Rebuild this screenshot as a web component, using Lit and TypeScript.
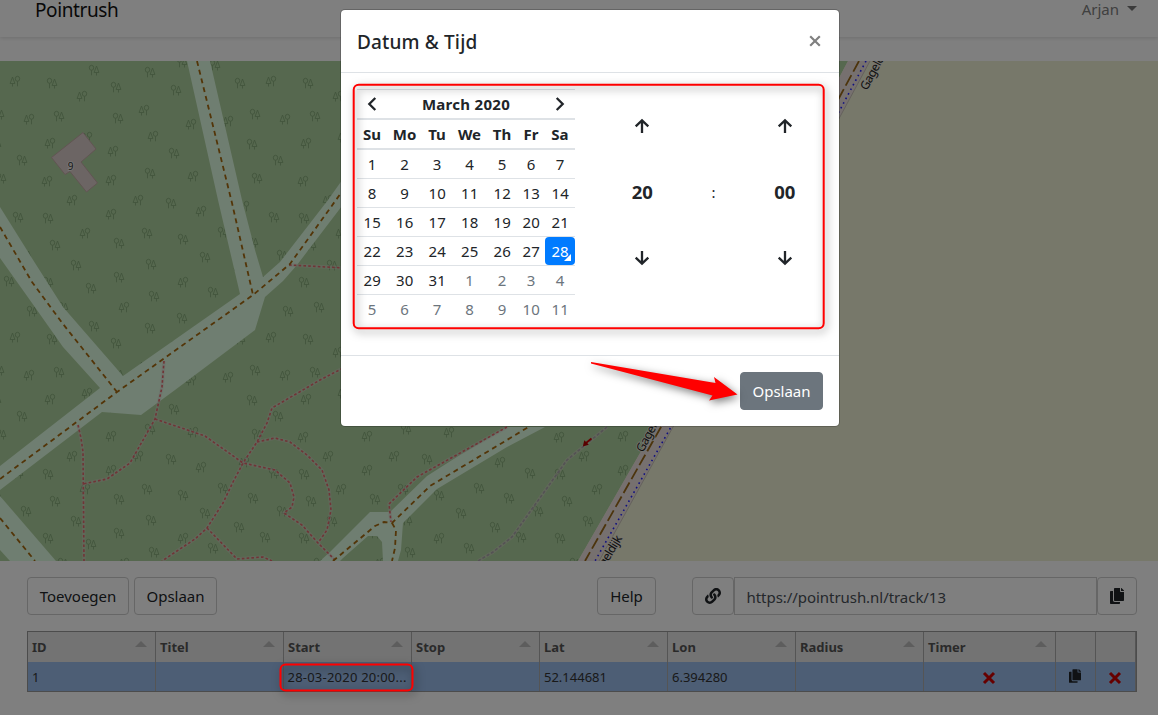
import { LitElement, html, svg, css } from "lit";
import { customElement } from "lit/decorators.js";

const COPY =
  "M320 448v40c0 13.255-10.745 24-24 24H24c-13.255 0-24-10.745-24-24V120c0-13.255 10.745-24 24-24h72v296c0 30.879 25.121 56 56 56h168zm0-344V0H152c-13.255 0-24 10.745-24 24v368c0 13.255 10.745 24 24 24h272c13.255 0 24-10.745 24-24V128H344c-13.2 0-24-10.8-24-24zm120.971-31.029L375.029 7.029A24 24 0 0 0 358.059 0H352v96h96v-6.059a24 24 0 0 0-7.029-16.97z";
const LINK =
  "M326.612 185.391c59.747 59.809 58.927 155.698.36 214.59-.11.12-.24.25-.36.37l-67.2 67.2c-59.27 59.27-155.699 59.262-214.96 0-59.27-59.26-59.27-155.7 0-214.96l37.106-37.106c9.84-9.84 26.786-3.3 27.294 10.606.648 17.722 3.826 35.527 9.69 52.721 1.986 5.822.567 12.262-3.783 16.612l-13.087 13.087c-28.026 28.026-28.905 73.66-1.155 101.96 28.024 28.579 74.086 28.749 102.325.51l67.2-67.19c28.191-28.191 28.073-73.757 0-101.83-3.701-3.694-7.429-6.564-10.341-8.569a16.037 16.037 0 0 1-6.947-12.606c-.396-10.567 3.348-21.456 11.698-29.806l21.054-21.055c5.521-5.521 14.182-6.199 20.584-1.731a152.482 152.482 0 0 1 20.522 17.197zM467.547 44.449c-59.261-59.262-155.69-59.27-214.96 0l-67.2 67.2c-.12.12-.25.25-.36.37-58.566 58.892-59.387 154.781.36 214.59a152.454 152.454 0 0 0 20.521 17.196c6.402 4.468 15.064 3.789 20.584-1.731l21.054-21.055c8.35-8.35 12.094-19.239 11.698-29.806a16.037 16.037 0 0 0-6.947-12.606c-2.912-2.005-6.64-4.875-10.341-8.569-28.073-28.073-28.191-73.639 0-101.83l67.2-67.19c28.239-28.239 74.3-28.069 102.325.51 27.75 28.3 26.872 73.934-1.155 101.96l-13.087 13.087c-4.35 4.35-5.769 10.79-3.783 16.612 5.864 17.194 9.042 34.999 9.69 52.721.509 13.906 17.454 20.446 27.294 10.606l37.106-37.106c59.271-59.259 59.271-155.699.001-214.959z";

// Tree pairs of one 256px forest tile; the flag puts the conifer first.
const TREES: [number, number, number][] = [
  [15, 81, 1], [52, 83, 0], [94, 70, 0], [150, 72, 0], [116, 87, 0], [82, 96, 1], [176, 90, 0],
  [255, 114, 0], [29, 119, 1], [59, 116, 0], [118, 118, 0], [144, 110, 1], [191, 124, 1],
  [228, 121, 1], [240, 83, 0], [153, 136, 1], [87, 137, 1], [50, 143, 1], [113, 151, 1],
  [174, 153, 0], [22, 160, 0], [252, 144, 0], [47, 181, 1], [111, 180, 1], [150, 173, 0],
  [193, 176, 1], [257, 178, 0], [72, 200, 1], [138, 200, 1], [182, 62, 0], [215, 65, 0],
  [171, 203, 0], [18, 217, 0], [48, 218, 0], [111, 214, 1], [201, 211, 1], [244, 206, 1],
  [85, 233, 1], [147, 233, 0], [119, 243, 0], [183, 239, 0], [55, 245, 0], [223, 232, 0],
  [253, 242, 0], [205, 257, 0], [151, 264, 0], [76, 265, 0], [26, 255, 0], [9, 281, 0],
  [48, 282, 0], [119, 277, 0], [91, 288, 0], [183, 282, 1], [213, 292, 0], [154, 296, 0],
  [124, 307, 1], [32, 311, 0], [63, 307, 0], [239, 271, 0],
];

const TREE_PATH = TREES.flatMap(([x, y, coniferFirst]) => {
  const c = coniferFirst ? x - 2.5 : x + 2.5;
  const r = coniferFirst ? x + 2.5 : x - 2.5;
  const out: string[] = [];
  for (let i = -1; i < 3; i++)
    for (let j = -1; j < 2; j++) {
      const dx = i * 256, dy = j * 256;
      out.push(
        `M${c + dx} ${y + dy - 4}l-2.4 6.5h4.8zM${c + dx} ${y + dy + 2.5}v3` +
        `M${r + dx - 2.2} ${y + dy - 2.2}a2.2 2.5 0 1 0 4.4 0a2.2 2.5 0 1 0 -4.4 0M${r + dx} ${y + dy + 0.3}v5`
      );
    }
  return out;
}).join("");

const FIELDS = [
  "M0 207L35 263L63 307L123 376L240 294L218 200L187 61H210L242 200L255 250L263 277L280 262L328 200L345 176V202L297 265L283 281L265 297L255 330L175 390L141 415L102 412L0 490V466L100 388L63 347L32 303L0 258Z",
  "M0 496L56 561H10L0 550Z",
  "M320 561L330 552L370 512H390L427 476L460 455L507 427H545L507 447L437 489L403 523L401 550L398 561H383L382 542L377 536H368L343 558L340 561Z",
];
const TRACKS = [
  "M0 227L32 282L63 324L117 392",
  "M0 479L117 392L253 295L290 264L341 193",
  "M197 61L232 203L253 295",
  "M0 518L35 561",
  "M333 561L375 526L384 522L392 523L430 486L507 440L530 426",
  "M392 523L396 530L395 548L392 561",
];
const FOOTPATHS = [
  "M164 361L162 387L155 419L130 463L107 479L83 484",
  "M78 425L81 438L83 452L84 561",
  "M155 419L205 436L243 463L275 470L290 483L294 497L292 507L284 513L302 525L318 543L335 560",
  "M347 366L320 380L272 408L267 423L257 442L243 463L233 482L223 503L207 528L195 539L162 561",
  "M257 442L275 438L290 442L307 455L322 470L329 490L331 510L327 530L318 543",
  "M207 528L237 559L263 557L272 561",
  "M289 265L345 268",
  "M507 427L417 477L389 504L391 522",
];

@customElement("map-view")
class MapView extends LitElement {
  static styles = css`
    :host { display: block; height: 500px; flex: none; }
    .map { display: block; width: 100%; height: 500px; background: #eef0d5; }
    .forest { fill: #add19e; }
    .trees { fill: none; stroke: #86aa7a; stroke-width: .9; }
    .field { fill: #dffce2; }
    .track { fill: none; stroke: #a66a10; stroke-width: 1.8; stroke-dasharray: 5 4; }
    .halo { fill: none; stroke: #dccfd0; stroke-opacity: .42; stroke-width: 3.4; }
    .foot { fill: none; stroke: #e0686c; stroke-width: 1.6; stroke-dasharray: 2.6 2.2; }
    .grey { fill: none; stroke: #a8a4a8; stroke-width: 1.6; stroke-dasharray: 3 2; }
    .verge { fill: #ece0de; }
    .edge { stroke: #c9c2b8; stroke-width: 1; fill: none; }
    .lane { stroke: #996818; stroke-width: 1.8; stroke-dasharray: 12 4; fill: none; }
    .cycle { stroke: #2020ff; stroke-width: 1.6; stroke-dasharray: 1.6 3.6; fill: none; }
    .street { font: 12px "Noto Sans", sans-serif; letter-spacing: -.5px; fill: #222; stroke: #eeeae0; stroke-width: 1.5; paint-order: stroke; }
    .house { fill: #d9cbc8; stroke: #c3aaa6; stroke-width: 1; }
    .num { font: 10px "Noto Sans", sans-serif; fill: #333; stroke: #eee; stroke-width: 1.6; paint-order: stroke; }
  `;
  render() {
    return html`<svg class="map" viewBox="0 61 1158 500" preserveAspectRatio="xMinYMin slice">
      <path class="forest" d="M0 61H848L655 427L578 561H0Z"></path>
      <clipPath id="wood"><path d="M0 61H848L655 427L578 561H0Z"></path></clipPath>
      <path class="trees" clip-path="url(#wood)" d=${TREE_PATH}></path>
      ${FIELDS.map((d) => svg`<path class="field" d=${d}></path>`)}
      ${FOOTPATHS.map((d) => svg`<path class="halo" d=${d}></path>`)}
      <path class="halo" d="M607 427L567 460L512 537L493 552L478 561"></path>
      ${FOOTPATHS.map((d) => svg`<path class="foot" d=${d}></path>`)}
      <path class="grey" d="M607 427L567 460L512 537L493 552L478 561"></path>
      ${TRACKS.map((d) => svg`<path class="track" d=${d}></path>`)}
      <path class="verge" d="M848 61H870L673 427L599 561H578L655 427Z"></path>
      <path class="edge" d="M870 61L673 427L599 561"></path>
      <path class="lane" d="M859 61L661 427L585 561"></path>
      <path class="cycle" d="M866 61L671 427L595 561"></path>
      <path d="M591.500 438.500L586 443" stroke="#c00" stroke-width="1.800"></path>
      <path d="M582.800 446.500L584.300 440.300L588.800 444.800Z" fill="#b00000"></path>
      <path class="house" d="M51.500 157.500L83 132.500L96 149L81 162L97.500 183L86.500 192L70 171.500L65 174.500Z"></path>
      <text class="num" x="67.700" y="170">9</text>
      <text class="street" transform="translate(867 91) rotate(-62)">Gageldijk</text>
      <text class="street" transform="translate(643 453) rotate(-62)">Gageldijk</text>
      <text class="street" transform="translate(597.500 580) rotate(-59)">Gageldijk</text>
    </svg>`;
  }
}

@customElement("date-time-picker")
class DateTimePicker extends LitElement {
  static styles = css`
    :host { display: flex; color: #212529; }
    .cal { display: grid; grid-template-columns: 30px 35px 30px 35px 30px 28px 30px; width: 218px; text-align: center; font-size: 15px; }
    .month, .head { font-weight: 700; box-sizing: border-box; }
    .month { grid-column: 1 / 8; display: flex; align-items: center; justify-content: space-between; height: 29px; border-top: 1px solid #dee2e6; padding: 0 9px; letter-spacing: .3px; }
    .head { height: 30px; line-height: 29px; border-top: 2px solid #dee2e6; }
    .day { height: 28px; line-height: 29px; border-top: 1px solid #dee2e6; padding-left: .3px; }
    .first { border-top-width: 2px; }
    .off { color: #6c757d; }
    .pill { background: #007bff; color: #fff; border-radius: 4px; height: 28px; margin-left: -.3px; position: relative; }
    .pill::after { content: ""; position: absolute; right: 4px; bottom: 4px; border-left: 7px solid transparent; border-bottom: 7px solid #fff; }
    .time { display: flex; margin-left: 32px; width: 213px; justify-content: space-between; height: 205px; }
    .unit { width: 70.5px; display: flex; flex-direction: column; align-items: center; justify-content: space-between; padding-top: 29px; height: 148px; font-size: 18.5px; font-weight: 700; line-height: 24px; }
    .colon { font-size: 15px; line-height: 24px; padding-top: 91px; }
    svg { display: block; fill: none; stroke: currentColor; }
  `;
  arrow(down: boolean) {
    return html`<svg width="16" height="16" viewBox="0 0 16 16" stroke-width="2.300">
      <path d=${down ? "M8 1V14M1.700 7.700L8 13.600L14.300 7.700" : "M8 15V2M1.700 8.300L8 2.400L14.300 8.300"}></path></svg>`;
  }
  render() {
    const days = Array.from({ length: 42 }, (_, i) => (i < 31 ? i + 1 : i - 30));
    return html`
      <div class="cal">
        <div class="month">
          <svg width="12" height="16" viewBox="0 0 12 16" stroke-width="2.300"><path d="M9.300 2L3.300 8L9.300 14"></path></svg>
          <span>March 2020</span>
          <svg width="12" height="16" viewBox="0 0 12 16" stroke-width="2.300"><path d="M2.700 2L8.700 8L2.700 14"></path></svg>
        </div>
        ${["Su", "Mo", "Tu", "We", "Th", "Fr", "Sa"].map((d) => html`<div class="head">${d}</div>`)}
        ${days.map((d, i) => html`<div class="day ${i < 7 ? "first" : ""} ${i > 30 ? "off" : ""}">${i === 27 ? html`<div class="pill">${d}</div>` : d}</div>`)}
      </div>
      <div class="time">
        <div class="unit">${this.arrow(false)}<span>20</span>${this.arrow(true)}</div>
        <div class="colon">:</div>
        <div class="unit">${this.arrow(false)}<span>00</span>${this.arrow(true)}</div>
      </div>`;
  }
}

@customElement("app-root")
class AppRoot extends LitElement {
  static styles = css`
    :host { display: flex; flex-direction: column; position: relative; width: 1158px; height: 715px; overflow: hidden; background: #fff; color: #212529; font: 15px/24px "Noto Sans", "Open Sans", sans-serif; }
    * { box-sizing: border-box; }
    .nav { height: 37px; margin-bottom: 24px; padding: 0 21px 0 35px; display: flex; justify-content: space-between; flex: none; box-shadow: 0 1px 4px rgba(0,0,0,.14); }
    .brand { font-size: 19px; line-height: 20px; letter-spacing: -.4px; color: #111; }
    .user { line-height: 19px; color: #808080; display: flex; gap: 8px; }
    .caret { margin-top: 6px; border: 5px solid transparent; border-top-color: #777; border-bottom: 0; height: 5px; }
    .tools { display: flex; padding: 16px 21px 16px 27px; flex: none; }
    .btn { height: 38px; border: 1px solid #ccc; border-radius: 4px; display: flex; align-items: center; justify-content: center; white-space: nowrap; }
    .add { width: 102px; margin-right: 5px; }
    .save { width: 83px; margin-right: auto; }
    .help { width: 59px; margin-right: 36px; }
    .link { width: 42px; padding-right: 1px; }
    .copy { width: 40px; padding-right: 1px; }
    .url { width: 363px; height: 38px; border: 1px solid #ccc; padding: 0 11.5px; line-height: 38px; color: #495057; letter-spacing: -.05px; }
    .grid { margin: 0 21px 0 27px; width: 1110px; border: 1px solid #999; font-size: 13px; flex: none; }
    .tr { display: grid; grid-template-columns: repeat(7, 128px) 132px 40px 1fr; height: 30px; }
    .th { border-right: 1px solid #aaa; background: #e6e6e6; font-weight: 700; color: #555; padding: 0 8px 0 4px; display: flex; justify-content: space-between; line-height: 31px; border-bottom: 1px solid #999; }
    .sort { border: 6px solid transparent; border-top: 0; border-bottom-color: #bbb; height: 6px; margin-top: 9px; }
    .td { border-right: 1px solid #aaa; background: #9abcea; color: #333; padding: 0 3px 0 4px; line-height: 30px; height: 29px; white-space: nowrap; overflow: hidden; text-overflow: ellipsis; }
    .stamp { letter-spacing: .22px; padding: 0 0 0 3.5px; }
    .row { height: 29px; }
    .mid { display: flex; align-items: center; justify-content: center; padding: 0 2px 1px 0; }
    .cross { padding-top: 4px; }
    .icon { fill: #212529; display: block; }
    .backdrop { position: absolute; inset: 0; background: rgba(0,0,0,.5); }
    .modal { position: absolute; left: 341px; top: 10px; width: 498px; height: 416px; border-radius: 4px; background: #fff; box-shadow: 0 0 0 1px rgba(0,0,0,.2); display: flex; flex-direction: column; }
    .mh { height: 63px; border-bottom: 1px solid #dee2e6; padding: 0 18.5px 0 16px; display: flex; align-items: center; justify-content: space-between; flex: none; }
    .title { font-size: 19px; font-weight: 500; letter-spacing: .15px; padding-top: 1px; }
    .mb { padding: 16px; flex: 1; }
    .mf { height: 71px; border-top: 1px solid #dee2e6; padding: 16px; display: flex; justify-content: flex-end; flex: none; }
    .primary { width: 83px; background: #6c757d; border-color: #6c757d; color: #fff; }
    .marks { position: absolute; left: 0; top: 0; filter: drop-shadow(2px 3px 4px rgba(0,0,0,.5)); }
  `;
  copyIcon(w: number, h: number) {
    return html`<svg class="icon" width=${w} height=${h} viewBox="0 0 448 512"><path d=${COPY}></path></svg>`;
  }
  cross() {
    return html`<svg width="14" height="14" viewBox="0 0 14 14"><path d="M2 2L12 12M12 2L2 12" stroke="#c00" stroke-width="3"></path></svg>`;
  }
  render() {
    return html`
      <div class="nav"><span class="brand">Pointrush</span><span class="user">Arjan<i class="caret"></i></span></div>
      <map-view></map-view>
      <div class="tools">
        <div class="btn add">Toevoegen</div>
        <div class="btn save">Opslaan</div>
        <div class="btn help">Help</div>
        <div class="btn link"><svg class="icon" width="16" height="16" viewBox="0 0 512 512"><path d=${LINK}></path></svg></div>
        <div class="url">https://pointrush.nl/track/13</div>
        <div class="btn copy">${this.copyIcon(14, 16)}</div>
      </div>
      <div class="grid">
        <div class="tr">
          ${["ID", "Titel", "Start", "Stop", "Lat", "Lon", "Radius", "Timer"].map((t) => html`<div class="th">${t}<i class="sort"></i></div>`)}
          <div class="th"></div><div class="th"></div>
        </div>
        <div class="tr row">
          ${["1", "", "28-03-2020 20:00...", "", "52.144681", "6.394280", ""].map((t, i) => html`<div class="td ${i === 2 ? "stamp" : ""}">${t}</div>`)}
          <div class="td mid cross">${this.cross()}</div>
          <div class="td mid">${this.copyIcon(12, 14)}</div>
          <div class="td mid cross">${this.cross()}</div>
        </div>
      </div>
      <div class="backdrop"></div>
      <div class="modal">
        <div class="mh"><span class="title">Datum &amp; Tijd</span>
          <svg width="12" height="12" viewBox="0 0 12 12"><path d="M1.200 1.200L10.800 10.800M10.800 1.200L1.200 10.800" stroke="#808080" stroke-width="2.200"></path></svg>
        </div>
        <div class="mb"><date-time-picker></date-time-picker></div>
        <div class="mf"><div class="btn primary">Opslaan</div></div>
      </div>
      <svg class="marks" width="1158" height="715" viewBox="0 0 1158 715">
        <rect x="353.700" y="84.700" width="470" height="243.500" rx="5" fill="none" stroke="red" stroke-width="2"></rect>
        <rect x="280.500" y="664.500" width="132" height="26" rx="5" fill="none" stroke="red" stroke-width="2"></rect>
        <path d="M591 362L715.500 383L714 377L737.500 394.500L709 400.500L712.500 395.500L591 363.500Z" fill="red"></path>
      </svg>`;
  }
}
